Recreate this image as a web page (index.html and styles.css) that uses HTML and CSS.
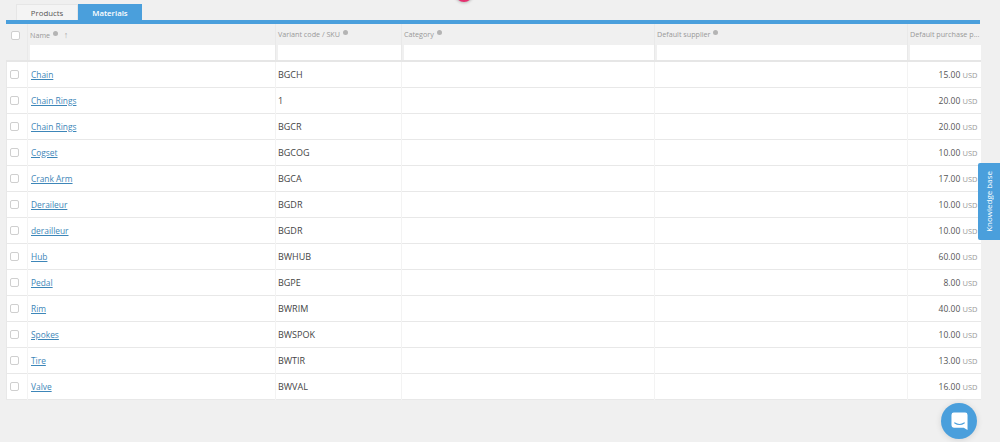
FILE: index.html
```html
<!DOCTYPE html>
<html lang="en">
<head>
    <meta charset="UTF-8">
    <title>Materials</title>
    <link rel="stylesheet" href="styles.css">
</head>
<body>
    <div class="pink-dot"></div>

    <div class="tabs">
        <a class="tab">Products</a>
        <a class="tab active">Materials</a>
    </div>

    <div class="grid-wrap">
        <table class="grid">
            <colgroup>
                <col class="col-check">
                <col class="col-name">
                <col class="col-sku">
                <col class="col-category">
                <col class="col-supplier">
                <col class="col-price">
            </colgroup>
            <thead>
                <tr class="title-row">
                    <th rowspan="2" class="check-head"><span class="checkbox"></span></th>
                    <th>Name <i class="info"></i> <span class="sort">↑</span></th>
                    <th>Variant code / SKU <i class="info"></i></th>
                    <th>Category <i class="info"></i></th>
                    <th>Default supplier <i class="info"></i></th>
                    <th>Default purchase p...</th>
                </tr>
                <tr class="filter-row">
                    <th><div class="filter"></div></th>
                    <th><div class="filter"></div></th>
                    <th><div class="filter"></div></th>
                    <th><div class="filter"></div></th>
                    <th><div class="filter"></div></th>
                </tr>
            </thead>
            <tbody>
                <tr><td><span class="checkbox"></span></td><td><a href="#">Chain</a></td><td>BGCH</td><td></td><td></td><td class="price">15.00 <small>USD</small></td></tr>
                <tr><td><span class="checkbox"></span></td><td><a href="#">Chain Rings</a></td><td>1</td><td></td><td></td><td class="price">20.00 <small>USD</small></td></tr>
                <tr><td><span class="checkbox"></span></td><td><a href="#">Chain Rings</a></td><td>BGCR</td><td></td><td></td><td class="price">20.00 <small>USD</small></td></tr>
                <tr><td><span class="checkbox"></span></td><td><a href="#">Cogset</a></td><td>BGCOG</td><td></td><td></td><td class="price">10.00 <small>USD</small></td></tr>
                <tr><td><span class="checkbox"></span></td><td><a href="#">Crank Arm</a></td><td>BGCA</td><td></td><td></td><td class="price">17.00 <small>USD</small></td></tr>
                <tr><td><span class="checkbox"></span></td><td><a href="#">Deraileur</a></td><td>BGDR</td><td></td><td></td><td class="price">10.00 <small>USD</small></td></tr>
                <tr><td><span class="checkbox"></span></td><td><a href="#">derailleur</a></td><td>BGDR</td><td></td><td></td><td class="price">10.00 <small>USD</small></td></tr>
                <tr><td><span class="checkbox"></span></td><td><a href="#">Hub</a></td><td>BWHUB</td><td></td><td></td><td class="price">60.00 <small>USD</small></td></tr>
                <tr><td><span class="checkbox"></span></td><td><a href="#">Pedal</a></td><td>BGPE</td><td></td><td></td><td class="price">8.00 <small>USD</small></td></tr>
                <tr><td><span class="checkbox"></span></td><td><a href="#">Rim</a></td><td>BWRIM</td><td></td><td></td><td class="price">40.00 <small>USD</small></td></tr>
                <tr><td><span class="checkbox"></span></td><td><a href="#">Spokes</a></td><td>BWSPOK</td><td></td><td></td><td class="price">10.00 <small>USD</small></td></tr>
                <tr><td><span class="checkbox"></span></td><td><a href="#">Tire</a></td><td>BWTIR</td><td></td><td></td><td class="price">13.00 <small>USD</small></td></tr>
                <tr><td><span class="checkbox"></span></td><td><a href="#">Valve</a></td><td>BWVAL</td><td></td><td></td><td class="price">16.00 <small>USD</small></td></tr>
            </tbody>
        </table>
    </div>

    <div class="kb-tab"><span>Knowledge base</span></div>

    <div class="chat-btn">
        <svg width="17" height="19" viewBox="0 0 18 20">
            <path d="M3 0.5h12a2.5 2.5 0 0 1 2.5 2.5v16l-4-2.5H3A2.5 2.5 0 0 1 0.5 14V3A2.5 2.5 0 0 1 3 0.5z" fill="#fff"/>
            <path d="M4 11.5c3 2 7 2 10 0" fill="none" stroke="#4a9fdc" stroke-width="1.2" stroke-linecap="round"/>
        </svg>
    </div>
</body>
</html>
```

FILE: styles.css
```css
* {
    margin: 0;
    padding: 0;
    box-sizing: border-box;
}

:root {
    --blue: #4a9fdc;
    --line: #e9e9e9;
    --bg: #f0f0f0;
}

html,
body {
    height: 442px;
    overflow: hidden;
}

body {
    background-color: var(--bg);
    font-family: 'Open Sans', sans-serif;
    font-size: 9px;
    color: #444;
    padding: 4px 20px 0 6px;
    position: relative;
}

.pink-dot {
    position: absolute;
    top: -16px;
    left: 455px;
    width: 18px;
    height: 18px;
    border-radius: 50%;
    background-color: #e5306f;
    box-shadow: 0 1px 3px rgba(0, 0, 0, 0.25);
}

.tabs {
    display: flex;
    padding-left: 10px;
    height: 16px;
}

.tab {
    width: 62px;
    font-size: 7.8px;
    line-height: 16px;
    text-align: center;
    color: #555;
    background-color: #f4f4f4;
    border: 1px solid #e6e6e6;
    border-bottom: none;
}

.tab.active {
    width: 64px;
    color: #fff;
    font-weight: 600;
    background-color: var(--blue);
    border-color: var(--blue);
}

.grid-wrap {
    width: 974px;
    border-top: 4px solid var(--blue);
}

.grid {
    width: 100%;
    border-collapse: collapse;
    table-layout: fixed;
}

.col-check { width: 21px; }
.col-name { width: 248px; }
.col-sku { width: 126px; }
.col-category { width: 253px; }
.col-supplier { width: 253px; }
.col-price { width: 73px; }

.title-row th {
    height: 20px;
    padding: 0 2px;
    text-align: left;
    font-size: 7.2px;
    font-weight: 400;
    color: #999;
    white-space: nowrap;
    overflow: hidden;
    border-left: 1px solid var(--line);
}

.title-row .check-head {
    vertical-align: top;
    padding: 7px 0 0 4px;
    border-left: none;
    border-bottom: 2px solid #e6e6e6;
}

.filter-row th {
    height: 17px;
    padding: 0 0 0 2px;
    border-left: 1px solid var(--line);
    border-bottom: 2px solid #e6e6e6;
}

.filter {
    height: 15px;
    background-color: #fff;
}

.info {
    display: inline-block;
    width: 5px;
    height: 5px;
    margin: 0 0 2px 1px;
    border-radius: 50%;
    background-color: #b4b4b4;
}

.sort {
    margin-left: 4px;
    font-size: 9px;
    color: #aaa;
}

tbody tr {
    height: 26px;
    background-color: #fff;
    border-bottom: 1px solid #e8e8e8;
}

tbody td {
    padding: 0 2px;
    border-left: 1px solid #f3f3f3;
    white-space: nowrap;
}

tbody td:first-child {
    padding-left: 3px;
    border-left: 1px solid #e8e8e8;
}

td a {
    margin-left: 1px;
    font-size: 8.4px;
    color: #3d86b8;
}

.grid .price {
    text-align: right;
    padding-right: 3px;
    font-size: 8.5px;
    font-weight: 500;
    color: #555;
}

.price small {
    font-size: 7.5px;
    font-weight: 400;
    color: #999;
}

.checkbox {
    display: block;
    width: 9px;
    height: 9px;
    border: 1px solid #cfcfcf;
    border-radius: 2px;
    background-color: #fff;
}

.kb-tab {
    position: absolute;
    top: 163px;
    left: 978px;
    width: 22px;
    height: 77px;
    padding-right: 2px;
    display: flex;
    align-items: center;
    justify-content: center;
    background-color: var(--blue);
    border-radius: 2px 0 0 2px;
    font-size: 8px;
    color: #fff;
}

.kb-tab span {
    writing-mode: vertical-rl;
    transform: rotate(180deg);
    white-space: nowrap;
}

.chat-btn {
    position: absolute;
    top: 403px;
    left: 941px;
    width: 36px;
    height: 36px;
    display: flex;
    align-items: center;
    justify-content: center;
    border-radius: 50%;
    background-color: var(--blue);
    box-shadow: 0 1px 6px rgba(0, 0, 0, 0.12);
}
```
